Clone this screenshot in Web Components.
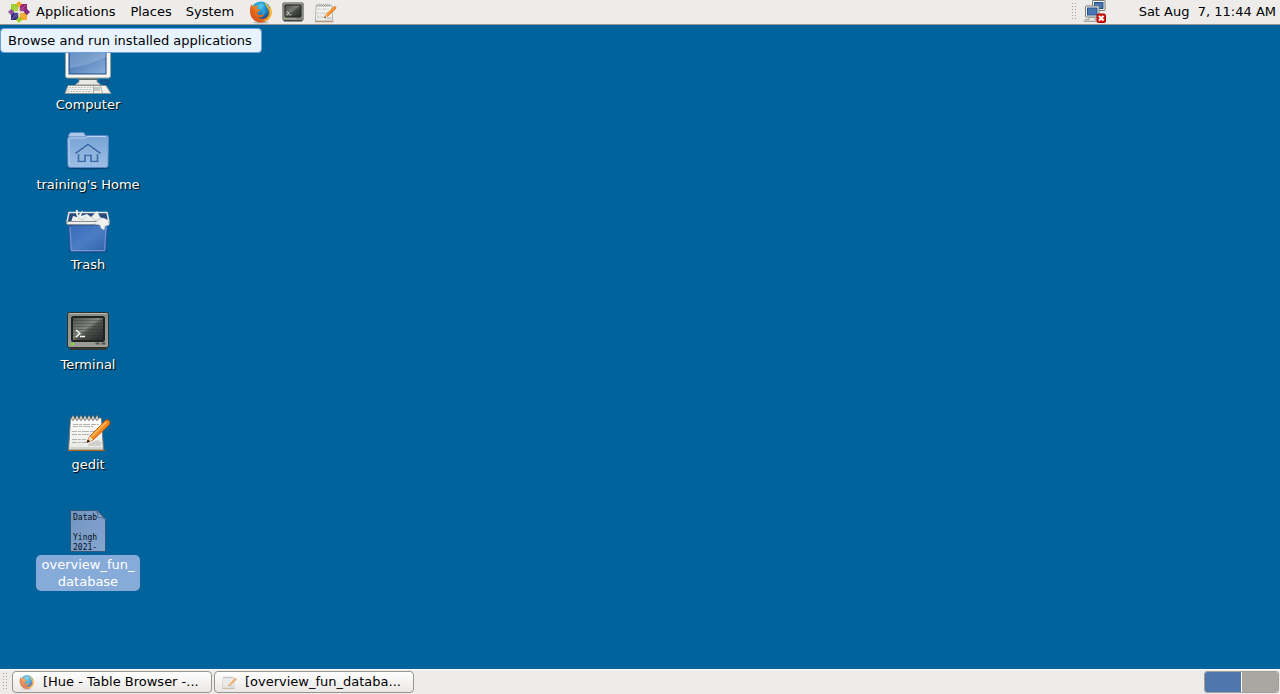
<!DOCTYPE html>
<html lang="en">
<head>
<meta charset="utf-8">
<title>Desktop</title>
<style>
html, body { height: 100%; margin: 0; }
body { font: 13px/17px "DejaVu Sans", sans-serif; color: #000; background: #00639c; overflow: hidden; }
</style>
</head>
<body>
<desktop-shell>
  <desktop-panel slot="top" edge="top">
    <panel-menu icon="centos">Applications</panel-menu>
    <panel-menu>Places</panel-menu>
    <panel-menu>System</panel-menu>
    <panel-launcher icon="firefox" label="Firefox"></panel-launcher>
    <panel-launcher icon="terminal" label="Terminal"></panel-launcher>
    <panel-launcher icon="gedit" label="gedit"></panel-launcher>
    <panel-grip slot="end"></panel-grip>
    <panel-launcher slot="end" icon="network" label="Network disconnected"></panel-launcher>
    <panel-clock slot="end">Sat Aug  7, 11:44 AM</panel-clock>
  </desktop-panel>
  <hint-bubble slot="hint">Browse and run installed applications</hint-bubble>
  <desktop-item icon="computer">Computer</desktop-item>
  <desktop-item icon="home">training's Home</desktop-item>
  <desktop-item icon="trash">Trash</desktop-item>
  <desktop-item icon="terminal" spaced>Terminal</desktop-item>
  <desktop-item icon="gedit" spaced>gedit</desktop-item>
  <desktop-item icon="file" spaced selected>overview_fun_<br>database</desktop-item>
  <desktop-panel slot="bottom" edge="bottom">
    <panel-grip></panel-grip>
    <task-button icon="firefox">[Hue - Table Browser -...</task-button>
    <task-button icon="gedit">[overview_fun_databa...</task-button>
    <workspace-switcher slot="end"></workspace-switcher>
  </desktop-panel>
</desktop-shell>

<script>
const tip = (a, c) => `<path transform="rotate(${a} 24 24)" d="M24 2l6 6-6 7-6-7z" fill="${c}"/>`;
const square = (x, y, c) => `<rect x="${x}" y="${y}" width="15" height="15" fill="${c}"/>`;

const ICONS = {
  centos: `${square(8, 8, '#9ccd2a')}${square(25, 8, '#932279')}${square(8, 25, '#3a2c80')}${square(25, 25, '#efa724')}
    <path d="M10 10l28 28M38 10L10 38" stroke="#fff" stroke-width="1" opacity=".6"/>
    <path d="M24 5v38M5 24h38" stroke="#f4f0e8" stroke-width="2"/>
    <path d="M13 17l6 6M17 13l6 6M35 17l-6 6M31 13l-6 6M13 31l6-6M17 35l6-6M35 31l-6-6M31 35l-6-6" stroke="#fff" opacity=".4"/>
    ${tip(0, '#efa724')}${tip(90, '#7b2c80')}${tip(180, '#9ccd2a')}${tip(270, '#8b4fa0')}`,

  firefox: `<defs><radialGradient id="globe" cx=".45" cy=".25" r=".8"><stop offset="0" stop-color="#43c5ee"/><stop offset=".5" stop-color="#187fc1"/><stop offset="1" stop-color="#132e66"/></radialGradient>
    <linearGradient id="fox" x1=".8" y1="0" x2=".2" y2="1"><stop offset="0" stop-color="#ffdb38"/><stop offset=".35" stop-color="#f58a1d"/><stop offset="1" stop-color="#cf4518"/></linearGradient></defs>
    <ellipse cx="24" cy="45" rx="16" ry="2" fill="#000" opacity=".2"/>
    <circle cx="24" cy="23" r="20" fill="url(#globe)"/>
    <path d="M22 7c5-3 9 0 8 5l-5 5-5-3zM29 20l4 3-2 6-5 2z" fill="#70d6e9" opacity=".35"/>
    <path d="M5 8c1 3 3 5 5 5 3-3 6-2 9-1-3 2-4 4-3 6l6 1c1 2-1 4-5 5 0 4 1 6 4 6 4 1 6-2 9-1-2 6-8 7-12 5 4 5 14 5 19-1 4-5 3-12 1-15-2-5-6-9-7-14 4 4 7 6 9 10l1 5 1-7c4 7 5 15 1 22C38 42 29 46 21 45 10 43 2 34 2 22c0-6 2-10 3-14z" fill="url(#fox)"/>
    <path d="M38 11c6 8 6 18 0 24-4 5-10 6-15 5 8 5 18 0 21-8 2-6 0-15-6-21z" fill="#ffd335" opacity=".7"/>
    <path d="M5 8c-5 9-4 22 4 29 6 7 17 8 24 4-10 1-18-3-22-10-3-5-3-9-1-13-3-2-5-5-5-10z" fill="#de5a20" opacity=".6"/>`,

  terminal: `<defs><linearGradient id="frame" x2="0" y2="1"><stop offset="0" stop-color="#8a8c86"/><stop offset="1" stop-color="#9c9e97"/></linearGradient>
    <linearGradient id="tube" x2="1" y2="1"><stop offset="0" stop-color="#4b4e49"/><stop offset=".45" stop-color="#83867f"/><stop offset=".55" stop-color="#4f524d"/><stop offset="1" stop-color="#22262b"/></linearGradient></defs>
    <rect x="5" y="36" width="38" height="7" rx="2" fill="#343733"/>
    <rect x="3.500" y="5.500" width="41" height="35" rx="2" fill="url(#frame)" stroke="#2d302c"/>
    <path d="M5 6.500h38" stroke="#b6b8b2"/>
    <rect x="8" y="10" width="32" height="24" rx="1" fill="url(#tube)" stroke="#20221f" stroke-width="2"/>
    <path d="M9 13.500h30M9 16.500h30M9 19.500h30M9 22.500h30M9 25.500h30M9 28.500h30M9 31.500h30" stroke="#292c29" opacity=".3"/>
    <path d="M12 23l4 3.500-4 3.500M16 29.500h5" fill="none" stroke="#fff" stroke-width="1.300"/>
    <rect x="7" y="36" width="3" height="2" fill="#7cdf28"/><path d="M31.500 36.500h4M37.500 36.500h4" stroke="#51544f" stroke-width="2"/>`,

  gedit: `<defs><linearGradient id="paper" x2="0" y2="1"><stop offset="0" stop-color="#fff"/><stop offset="1" stop-color="#e9eae6"/></linearGradient></defs>
    <path d="M6.500 11h31l2 32h-35z" fill="url(#paper)" stroke="#75756e"/>
    <path d="M4 43.500h37" stroke="#b7670a"/><path d="M6 40h33v2H6z" fill="#d3d4d0"/>
    <g fill="#f7f7f5" stroke="#545752" stroke-width=".8"><ellipse cx="9" cy="11" rx="1.200" ry="2.500"/><ellipse cx="13" cy="11" rx="1.200" ry="2.500"/><ellipse cx="17" cy="11" rx="1.200" ry="2.500"/><ellipse cx="21" cy="11" rx="1.200" ry="2.500"/><ellipse cx="25" cy="11" rx="1.200" ry="2.500"/><ellipse cx="29" cy="11" rx="1.200" ry="2.500"/><ellipse cx="33" cy="11" rx="1.200" ry="2.500"/></g>
    <path d="M9 17.500h26M9 19.500h20M8 24.500h23M8 27.500h18M8 32.500h14M8 35.500h17" stroke="#b2b3af" stroke-dasharray="5 1 3 1 7 1"/>
    <path d="M25 36l9-3 4 3-2 3H24z" fill="#777" opacity=".25"/>
    <path d="M23 35l3-6L42 13q3-1 4 2l-1 3-16 15z" fill="#f58b20" stroke="#c25705"/>
    <path d="M27.500 29.500L42 15" stroke="#ffb152" stroke-width="2"/>
    <path d="M23 35l3-6 3 4z" fill="#f5dfb4"/><path d="M22.500 35.500l1.500-3 2 2z" fill="#111"/>`,

  computer: `<defs><linearGradient id="glass" x2="1" y2="1"><stop offset="0" stop-color="#4173b4"/><stop offset=".5" stop-color="#5e8ac3"/><stop offset="1" stop-color="#8fb0da"/></linearGradient></defs>
    <path d="M36 34h8q2 1 0 3h-4q-2 1 0 3" fill="none" stroke="#155083" stroke-width="1.500"/>
    <rect x="1.500" y="-4" width="45" height="35" rx="2" fill="#f7f7f4" stroke="#9b9d98"/>
    <rect x="5" y="0" width="37" height="27" fill="url(#glass)" stroke="#234b82"/>
    <path d="M6 21Q17 20 27 16t15-6V0H6z" fill="#fff" opacity=".18"/>
    <path d="M15 32h18v3l3 2v1H12v-1l3-2z" fill="#e8e8e5" stroke="#92958f"/><path d="M15 32.500h18" stroke="#646862"/>
    <path d="M4 38.500h38l5 8H1z" fill="#f1f1ee" stroke="#92958f"/>
    <path d="M5 40.500h23M4 42.500h24M3 44.500h25" stroke="#c3c5c0" stroke-dasharray="2 1"/><path d="M29.500 39v7M36.500 39l2 7" stroke="#aeb0ab"/><path d="M30 40h6v4h-6z" fill="#c3c5c0"/>`,

  home: `<defs><linearGradient id="folder" x2="0" y2="1"><stop offset="0" stop-color="#77a3d6"/><stop offset="1" stop-color="#9dbee4"/></linearGradient></defs>
    <ellipse cx="24" cy="41" rx="22" ry="1.500" fill="#052f55" opacity=".6"/>
    <path d="M4.500 8l2-2.500h13l3 4H44v5H4.500z" fill="#a9c7e9" stroke="#5887c2"/>
    <path d="M3.500 12q0-2 2-2h15l2-1.500h20q2 0 2 2l-.5 28q0 2-2 2H6q-2 0-2-2z" fill="url(#folder)" stroke="#5887c2"/>
    <path d="M5 38V12q0-1 2-1h14l2-1.500h19" fill="none" stroke="#bdd4ef"/>
    <path d="M11.500 26.500L24 17.500l12.500 9M14.500 27v7.500H21v-6h6v6h6.500V27" fill="none" stroke="#b2cceb" stroke-width="1.500" transform="translate(0 1)"/>
    <path d="M11.500 26.500L24 17.500l12.500 9M14.500 27v7.500H21v-6h6v6h6.500V27" fill="none" stroke="#3c6cab" stroke-width="1.700"/>`,

  trash: `<defs><linearGradient id="bin" x2="1" y2="1"><stop offset="0" stop-color="#3769b6"/><stop offset=".5" stop-color="#4b7cc4"/><stop offset="1" stop-color="#3163aa"/></linearGradient></defs>
    <ellipse cx="24" cy="44" rx="20" ry="2" fill="#052f55" opacity=".55"/>
    <path d="M5 5.500h38L45 15H3z" fill="#294b7b" stroke="#e7e8e4" stroke-width="1.500"/>
    <path d="M7 15l2-6 4 1 6-7-2 6 6-2 4 3 6-6 3 6 4 2v5z" fill="#edefec"/><path d="M13 3q-1 6 3 7" fill="none" stroke="#edefec" stroke-width="2"/><path d="M14 11l5 2 3-3M28 10l3 4 6-3" fill="none" stroke="#c9ccc8"/>
    <path d="M4.500 18h39L42 43q0 2-2 2H8q-2 0-2-2z" fill="url(#bin)" stroke="#24539a"/>
    <path d="M6 20l1.500 23.500h33L42 20" fill="none" stroke="#7da3da" opacity=".8"/>
    <rect x="2.500" y="14.500" width="43" height="3" rx="1.500" fill="#eff0ed" stroke="#888e91"/>
    <path d="M32 15l7-4 5 2 1 5-4 1-1 4-3-2-1-3-5-1z" fill="#f0f1ef" stroke="#c5c9c9" stroke-width=".5"/>`,

  file: `<defs><linearGradient id="sheet" x2="1" y2="1"><stop offset="0" stop-color="#7295bf"/><stop offset="1" stop-color="#85a6d0"/></linearGradient></defs>
    <path d="M6.500 3.500h27l8 8v33h-35z" fill="url(#sheet)" stroke="#31577c"/>
    <path d="M32 3.500q3 4 2 7 4-1 7.500 2z" fill="#8facce" stroke="#4b7197"/>
    <g font-family="DejaVu Sans Mono, monospace" font-size="8" fill="#07101b"><text x="9" y="13">Datab</text><text x="9" y="33">Yingh</text><text x="9" y="43">2021-</text></g>`,

  network: `<rect x="19" y="1" width="25" height="20" rx="1" fill="#f6f6f3" stroke="#777a75" stroke-width="2"/><rect x="23" y="5" width="17" height="12" fill="#4876b3" stroke="#254f89" stroke-width="2"/>
    <rect x="5" y="12" width="27" height="22" rx="1" fill="#f6f6f3" stroke="#777a75" stroke-width="2"/><rect x="9" y="16" width="19" height="14" fill="#4876b3" stroke="#254f89" stroke-width="2"/>
    <path d="M12 35h12v4h3l5 4H2l3-4h7z" fill="#e9e9e6" stroke="#8a8d87" stroke-width="1.500"/><path d="M6 41h20" stroke="#aaa" stroke-dasharray="2 1"/>
    <rect x="28" y="28" width="17" height="17" rx="3" fill="#d71b0b" stroke="#a40000" stroke-width="2"/><path d="M32 32l9 9M41 32l-9 9" stroke="#fff" stroke-width="4"/>`
};

function define(name, render) {
  customElements.define(name, class extends HTMLElement {
    connectedCallback() {
      if (this.shadowRoot) return;
      const tpl = document.createElement('template');
      tpl.innerHTML = render(this);
      this.attachShadow({ mode: 'open' }).append(tpl.content.cloneNode(true));
    }
  });
}

define('theme-icon', el => `
  <style>:host{display:block;flex:none;width:var(--size,24px);height:var(--size,24px)} svg{display:block;width:100%;height:100%;overflow:visible}</style>
  <svg viewBox="0 0 48 48" aria-hidden="true">${ICONS[el.getAttribute('name')]}</svg>`);

define('desktop-shell', () => `
  <style>
    :host{display:flex;flex-direction:column;height:100vh;background:#00639c}
    main{position:relative;flex:1;min-height:0;display:flex;flex-direction:column;align-items:flex-start;padding-top:22px;box-sizing:border-box}
    slot[name=hint]::slotted(*){position:absolute;left:0;top:3px;z-index:1}
  </style>
  <slot name="top"></slot><main><slot name="hint"></slot><slot></slot></main><slot name="bottom"></slot>`);

define('desktop-panel', () => `
  <style>
    :host{display:block;flex:none;background:#edeceb}
    :host([edge=top]){border-bottom:1px solid #979590}
    :host([edge=bottom]){border-top:1px solid #fff}
    .bar{display:flex;justify-content:space-between;height:24px}
    .group{display:flex;align-items:center}
    :host([edge=top]) .start{padding-left:7px}
    :host([edge=top]) .end{padding-right:4px}
    :host([edge=bottom]) .start{gap:2px}
    :host([edge=bottom]) .group{padding:0 1px}
  </style>
  <div class="bar"><div class="group start"><slot></slot></div><div class="group end"><slot name="end"></slot></div></div>`);

define('panel-menu', el => `
  <style>
    :host{display:block}
    button{display:flex;align-items:center;gap:5px;height:24px;padding:0 7px;border:0;background:none;font:inherit;color:inherit;white-space:nowrap}
    :host([icon]) button{padding:0 8px 0 0}
    span{padding-bottom:2px}
  </style>
  <button type="button" aria-haspopup="menu">${el.hasAttribute('icon') ? `<theme-icon name="${el.getAttribute('icon')}"></theme-icon>` : ''}<span><slot></slot></span></button>`);

define('panel-launcher', el => `
  <style>:host{display:block} button{display:block;padding:0 0 0 8px;border:0;background:none} :host([slot=end]) button{padding-left:4px}</style>
  <button type="button" aria-label="${el.getAttribute('label')}"><theme-icon name="${el.getAttribute('icon')}"></theme-icon></button>`);

define('panel-grip', () => `
  <style>:host{display:block;width:6px;height:18px;margin:0 1px 0 2px;background:linear-gradient(90deg,transparent 1px,#edeceb 1px) 0 0/3px 3px,linear-gradient(#a5a39f 1px,transparent 1px) 0 0/3px 3px}</style>`);

define('panel-clock', () => `
  <style>:host{display:block;padding:0 0 2px 32px} time{display:block;white-space:pre}</style><time datetime="2021-08-07T11:44"><slot></slot></time>`);

define('hint-bubble', () => `
  <style>:host{display:block;padding:3px 9px 3px 7px;border:1px solid #6f9edb;border-radius:4px;background:#e7f3ff;white-space:nowrap}</style>
  <div role="tooltip"><slot></slot></div>`);

define('desktop-item', el => `
  <style>
    :host{display:block;flex:none;width:176px;min-height:80px}
    :host([spaced]){padding-top:20px}
    button{display:flex;flex-direction:column;align-items:center;width:100%;padding:0;border:0;background:none;font:inherit;color:#fff}
    theme-icon{--size:48px}
    span{padding:1px 6px;border-radius:5px;text-shadow:1px 1px 1px #000;white-space:nowrap}
    :host([selected]) span{background:#86abd9;text-shadow:none}
  </style>
  <button type="button"><theme-icon name="${el.getAttribute('icon')}"></theme-icon><span><slot></slot></span></button>`);

define('task-button', el => `
  <style>
    :host{display:block}
    button{display:flex;align-items:center;gap:8px;box-sizing:border-box;width:200px;height:22px;padding:0 6px;border:1px solid #979590;border-radius:4px;background:linear-gradient(#fff,#f4f3f2 50%,#e9e8e6);font:inherit;color:inherit;white-space:nowrap}
    theme-icon{--size:16px;opacity:.7}
    span{padding-bottom:2px}
  </style>
  <button type="button"><theme-icon name="${el.getAttribute('icon')}"></theme-icon><span><slot></slot></span></button>`);

define('workspace-switcher', () => `
  <style>
    :host{display:grid;grid-template-columns:1fr 1fr;gap:1px;box-sizing:border-box;width:75px;height:22px;border:1px solid #a29e99;border-radius:3px;background:#fff;overflow:hidden}
    button{padding:0;border:0;background:#aaa6a2}
    button[aria-pressed=true]{background:#4e78ad}
  </style>
  <button type="button" aria-label="Workspace 1" aria-pressed="true"></button><button type="button" aria-label="Workspace 2" aria-pressed="false"></button>`);
</script>
</body>
</html>
